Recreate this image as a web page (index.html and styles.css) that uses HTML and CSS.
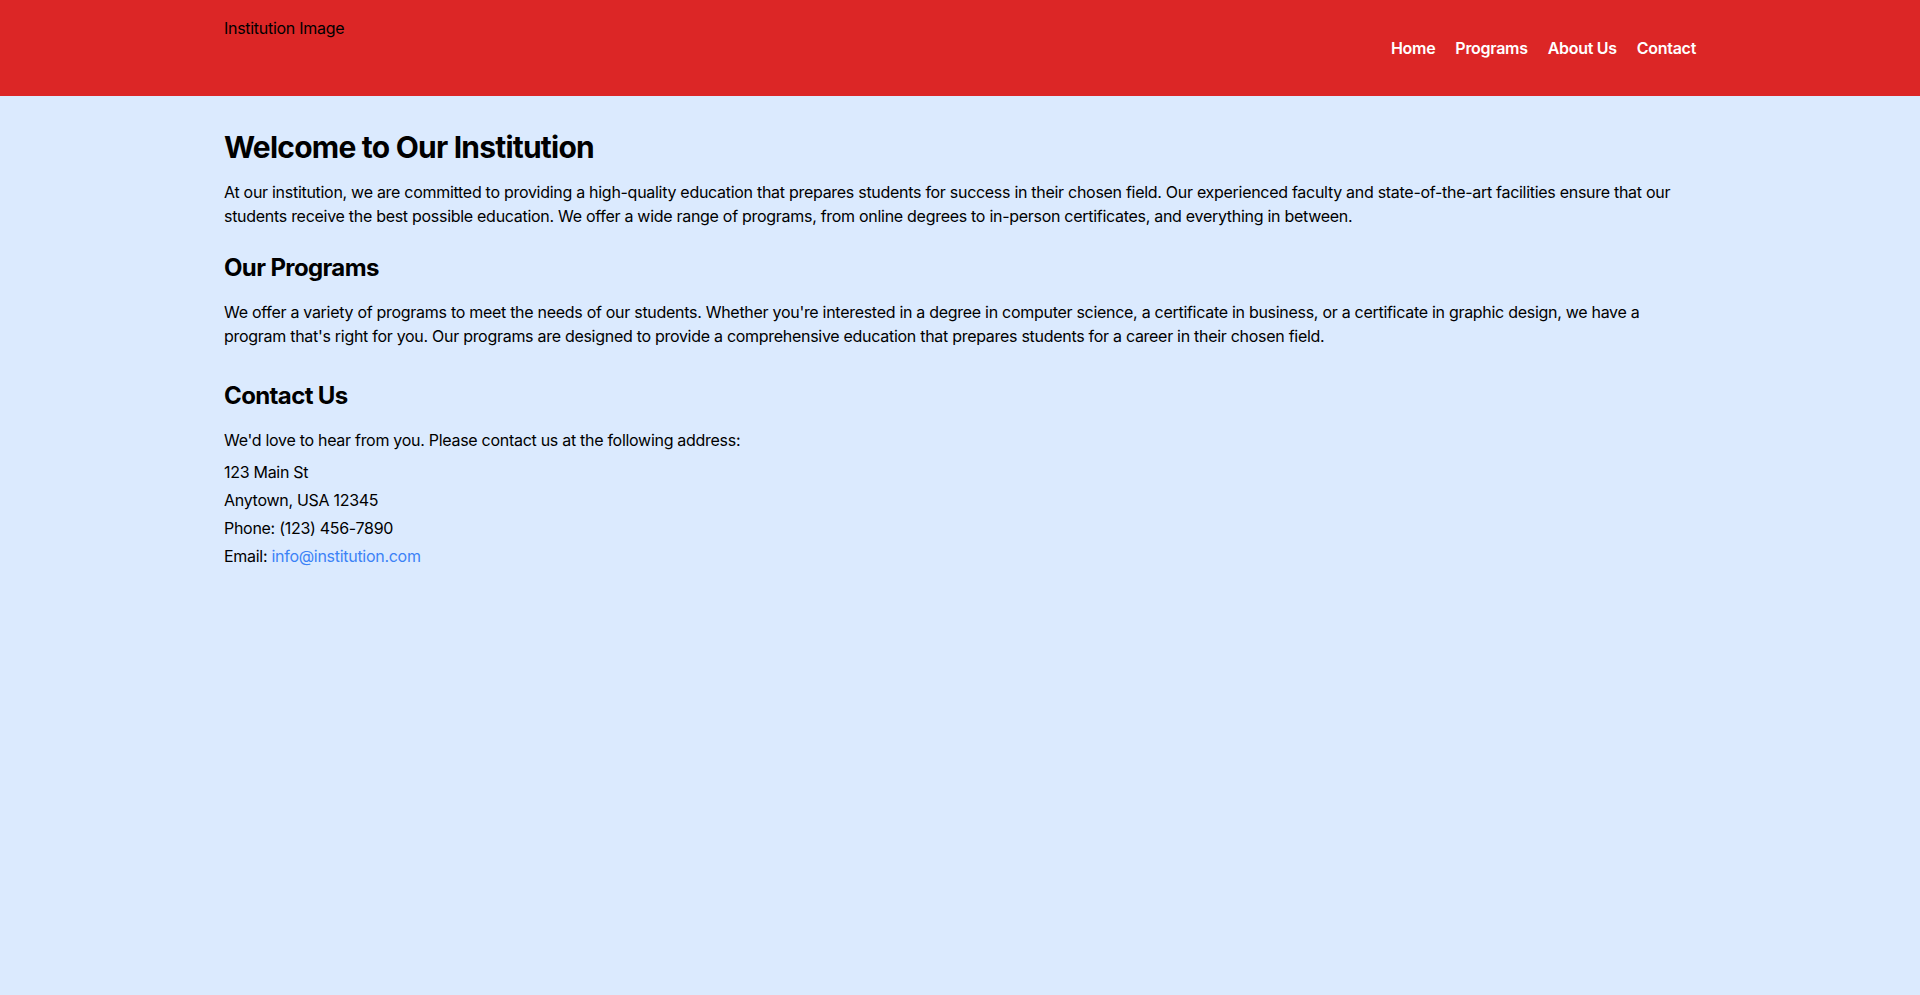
FILE: index.html
```html
<!DOCTYPE html>
<html lang="en">
<head>
<meta charset="utf-8">
<title>Institution</title>
<link rel="stylesheet" href="styles.css">
</head>
<body>
<header class="site-header">
  <div class="container header-inner">
    <div class="logo">Institution Image</div>
    <nav class="nav">
      <a href="#" class="nav-link">Home</a>
      <a href="#" class="nav-link">Programs</a>
      <a href="#" class="nav-link">About Us</a>
      <a href="#" class="nav-link">Contact</a>
    </nav>
  </div>
</header>
<main class="container main">
  <section class="section">
    <h1 class="title">Welcome to Our Institution</h1>
    <p class="text">At our institution, we are committed to providing a high-quality education that prepares students for success in their chosen field. Our experienced faculty and state-of-the-art facilities ensure that our students receive the best possible education. We offer a wide range of programs, from online degrees to in-person certificates, and everything in between.</p>
  </section>
  <section class="section">
    <h2 class="subtitle">Our Programs</h2>
    <p class="text">We offer a variety of programs to meet the needs of our students. Whether you're interested in a degree in computer science, a certificate in business, or a certificate in graphic design, we have a program that's right for you. Our programs are designed to provide a comprehensive education that prepares students for a career in their chosen field.</p>
  </section>
  <section class="section contact">
    <h2 class="subtitle">Contact Us</h2>
    <p class="text intro">We'd love to hear from you. Please contact us at the following address:</p>
    <p class="text line">123 Main St</p>
    <p class="text line">Anytown, USA 12345</p>
    <p class="text line">Phone: (123) 456-7890</p>
    <p class="text line">Email: <a href="#" class="link">info@institution.com</a></p>
  </section>
</main>
</body>
</html>
```
FILE: styles.css
```css
* { box-sizing: border-box; }
html, body { margin: 0; padding: 0; }
body {
  font-family: Inter, "Noto Sans", "Liberation Sans", sans-serif;
  font-size: 16px;
  line-height: 24px;
  letter-spacing: -0.018em;
  color: #000;
  background: #dbeafe;
  min-height: 995px;
}
.container {
  max-width: 1536px;
  margin: 0 auto;
  padding: 0 32px;
}
.site-header {
  background: #dc2626;
  padding: 16px 0;
}
.header-inner {
  display: flex;
  justify-content: space-between;
  align-items: center;
}
.logo {
  height: 64px;
  line-height: normal;
  padding-top: 2px;
}
.nav {
  display: flex;
  gap: 20px;
}
.nav-link {
  color: #fff;
  text-decoration: none;
  font-weight: 600;
}
.main {
  padding-top: 33px;
  padding-bottom: 32px;
}
.title {
  font-size: 30px;
  line-height: 36px;
  font-weight: 700;
  letter-spacing: -0.026em;
  margin: 0 0 15px;
}
.subtitle {
  font-size: 24px;
  line-height: 32px;
  font-weight: 700;
  letter-spacing: -0.026em;
  margin: 0 0 16px;
}
.text { margin: 0; }
.section { margin-bottom: 24px; }
.section + .contact { margin-top: 32px; }
.intro { margin-bottom: 8px; }
.line + .line { margin-top: 4px; }
.link { color: #3b82f6; text-decoration: none; }
```
